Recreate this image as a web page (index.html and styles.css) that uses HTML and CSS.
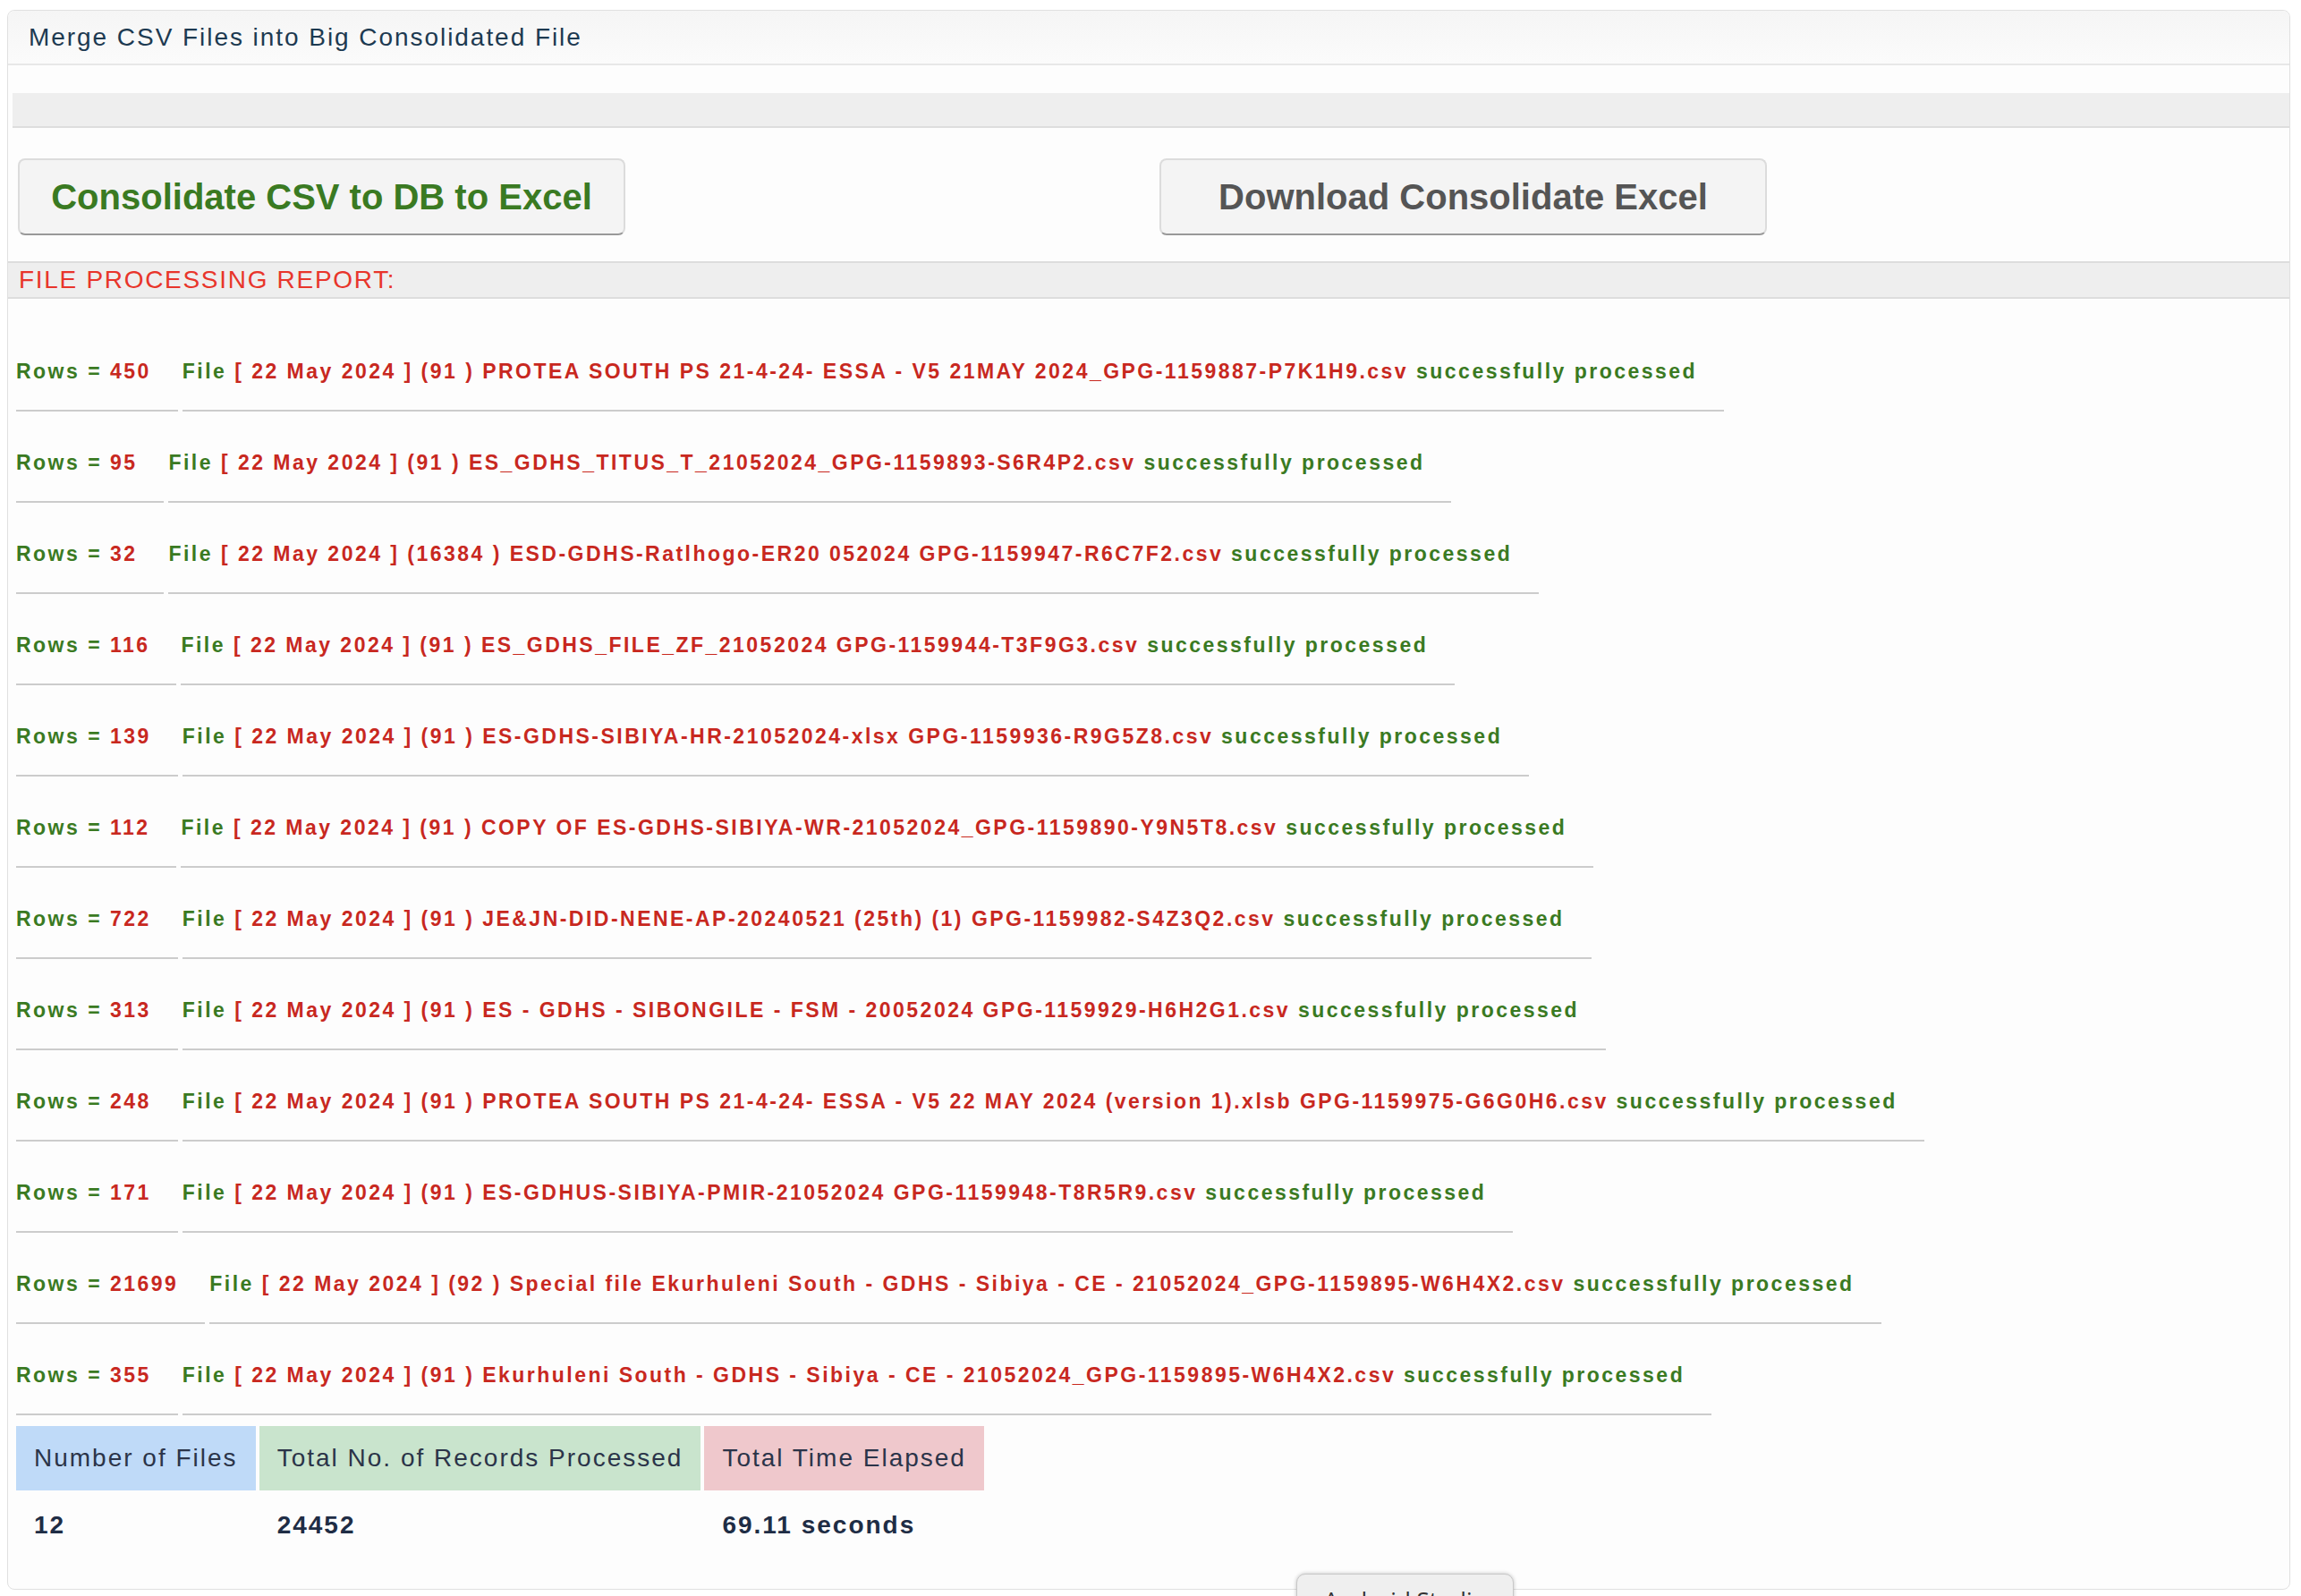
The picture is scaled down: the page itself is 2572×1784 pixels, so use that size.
FILE: index.html
```html
<!DOCTYPE html>
<html>
<head>
<meta charset="utf-8">
<title>Merge CSV Files</title>
<link rel="stylesheet" href="styles.css">
</head>
<body>
<div class="panel">
  <div class="panel-heading">Merge CSV Files into Big Consolidated File</div>
  <div class="panel-body">
    <div class="toolbar-strip"></div>
    <div class="actions">
      <div class="action-col"><button class="btn btn-consolidate">Consolidate CSV to DB to Excel</button></div>
      <div class="action-col"><button class="btn btn-download">Download Consolidate Excel</button></div>
    </div>
    <div class="report-heading">FILE PROCESSING REPORT:</div>
    <div class="report-list">
      <table class="report-row"><tr><td class="rows-cell"><span class="ok">Rows = </span><span class="err">450</span></td><td class="file-cell"><span class="ok">File</span> <span class="err">[ 22 May 2024 ] (91 ) PROTEA SOUTH PS 21-4-24- ESSA - V5 21MAY 2024_GPG-1159887-P7K1H9.csv</span> <span class="ok">successfully processed</span></td></tr></table>
      <table class="report-row"><tr><td class="rows-cell"><span class="ok">Rows = </span><span class="err">95</span></td><td class="file-cell"><span class="ok">File</span> <span class="err">[ 22 May 2024 ] (91 ) ES_GDHS_TITUS_T_21052024_GPG-1159893-S6R4P2.csv</span> <span class="ok">successfully processed</span></td></tr></table>
      <table class="report-row"><tr><td class="rows-cell"><span class="ok">Rows = </span><span class="err">32</span></td><td class="file-cell"><span class="ok">File</span> <span class="err">[ 22 May 2024 ] (16384 ) ESD-GDHS-Ratlhogo-ER20 052024 GPG-1159947-R6C7F2.csv</span> <span class="ok">successfully processed</span></td></tr></table>
      <table class="report-row"><tr><td class="rows-cell"><span class="ok">Rows = </span><span class="err">116</span></td><td class="file-cell"><span class="ok">File</span> <span class="err">[ 22 May 2024 ] (91 ) ES_GDHS_FILE_ZF_21052024 GPG-1159944-T3F9G3.csv</span> <span class="ok">successfully processed</span></td></tr></table>
      <table class="report-row"><tr><td class="rows-cell"><span class="ok">Rows = </span><span class="err">139</span></td><td class="file-cell"><span class="ok">File</span> <span class="err">[ 22 May 2024 ] (91 ) ES-GDHS-SIBIYA-HR-21052024-xlsx GPG-1159936-R9G5Z8.csv</span> <span class="ok">successfully processed</span></td></tr></table>
      <table class="report-row"><tr><td class="rows-cell"><span class="ok">Rows = </span><span class="err">112</span></td><td class="file-cell"><span class="ok">File</span> <span class="err">[ 22 May 2024 ] (91 ) COPY OF ES-GDHS-SIBIYA-WR-21052024_GPG-1159890-Y9N5T8.csv</span> <span class="ok">successfully processed</span></td></tr></table>
      <table class="report-row"><tr><td class="rows-cell"><span class="ok">Rows = </span><span class="err">722</span></td><td class="file-cell"><span class="ok">File</span> <span class="err">[ 22 May 2024 ] (91 ) JE&amp;JN-DID-NENE-AP-20240521 (25th) (1) GPG-1159982-S4Z3Q2.csv</span> <span class="ok">successfully processed</span></td></tr></table>
      <table class="report-row"><tr><td class="rows-cell"><span class="ok">Rows = </span><span class="err">313</span></td><td class="file-cell"><span class="ok">File</span> <span class="err">[ 22 May 2024 ] (91 ) ES - GDHS - SIBONGILE - FSM - 20052024 GPG-1159929-H6H2G1.csv</span> <span class="ok">successfully processed</span></td></tr></table>
      <table class="report-row"><tr><td class="rows-cell"><span class="ok">Rows = </span><span class="err">248</span></td><td class="file-cell"><span class="ok">File</span> <span class="err">[ 22 May 2024 ] (91 ) PROTEA SOUTH PS 21-4-24- ESSA - V5 22 MAY 2024 (version 1).xlsb GPG-1159975-G6G0H6.csv</span> <span class="ok">successfully processed</span></td></tr></table>
      <table class="report-row"><tr><td class="rows-cell"><span class="ok">Rows = </span><span class="err">171</span></td><td class="file-cell"><span class="ok">File</span> <span class="err">[ 22 May 2024 ] (91 ) ES-GDHUS-SIBIYA-PMIR-21052024 GPG-1159948-T8R5R9.csv</span> <span class="ok">successfully processed</span></td></tr></table>
      <table class="report-row"><tr><td class="rows-cell"><span class="ok">Rows = </span><span class="err">21699</span></td><td class="file-cell"><span class="ok">File</span> <span class="err">[ 22 May 2024 ] (92 ) Special file Ekurhuleni South - GDHS - Sibiya - CE - 21052024_GPG-1159895-W6H4X2.csv</span> <span class="ok">successfully processed</span></td></tr></table>
      <table class="report-row"><tr><td class="rows-cell"><span class="ok">Rows = </span><span class="err">355</span></td><td class="file-cell"><span class="ok">File</span> <span class="err">[ 22 May 2024 ] (91 ) Ekurhuleni South - GDHS - Sibiya - CE - 21052024_GPG-1159895-W6H4X2.csv</span> <span class="ok">successfully processed</span></td></tr></table>
    </div>
    <table class="summary">
      <tr>
        <th class="sum-files">Number of Files</th>
        <th class="sum-records">Total No. of Records Processed</th>
        <th class="sum-time">Total Time Elapsed</th>
      </tr>
      <tr>
        <td>12</td>
        <td>24452</td>
        <td>69.11 seconds</td>
      </tr>
    </table>
  </div>
</div>
<div class="dock-tooltip">Android Studio</div>
</body>
</html>
```
FILE: styles.css
```css
html {
  overflow: hidden;
  background: #ffffff;
}
body {
  margin: 11px 12px 0 8px;
  font-family: "Liberation Sans", Arial, Helvetica, sans-serif;
  background: #ffffff;
}
.panel {
  border: 1px solid #e0e0e0;
  border-radius: 8px;
  background: #fdfdfd;
}
.panel-heading {
  height: 59px;
  line-height: 59px;
  padding-left: 23px;
  font-size: 28px;
  letter-spacing: 1.95px;
  color: #1d3a51;
  background: linear-gradient(#f5f5f5, #fbfbfb);
  border-bottom: 2px solid #e8e8e8;
  border-radius: 8px 8px 0 0;
}
.panel-body {
  padding: 31px 0 32px 0;
}
.toolbar-strip {
  margin-left: 5px;
  height: 37px;
  background: #eeeeee;
  border-bottom: 2px solid #dddddd;
}
.actions {
  display: grid;
  grid-template-columns: 1276px 1fr;
  margin: 34px 0 0 5px;
}
.action-col {
  padding-left: 6px;
}
.btn {
  width: 679px;
  height: 86px;
  background: #f4f4f4;
  border: 2px solid #dcdcdc;
  border-bottom-color: #999999;
  border-radius: 8px;
  font-family: "Liberation Sans", Arial, Helvetica, sans-serif;
  font-weight: bold;
  font-size: 40px;
  padding: 0;
  cursor: pointer;
}
.btn-consolidate {
  color: #3a7a22;
}
.btn-download {
  color: #555555;
}
.report-heading {
  margin-top: 29px;
  height: 38px;
  line-height: 38px;
  padding-left: 12px;
  background: #eeeeee;
  border-top: 2px solid #dddddd;
  border-bottom: 2px solid #dddddd;
  color: #e8352b;
  font-size: 28px;
  letter-spacing: 1.7px;
}
.report-list {
  padding-top: 38px;
}
.report-row {
  margin-left: 4px;
  border-collapse: separate;
  border-spacing: 5px 0;
  margin-bottom: 14px;
  font-size: 23px;
  font-weight: bold;
  letter-spacing: 2.48px;
}
.report-row:last-child {
  margin-bottom: 12px;
}
.report-row td {
  padding: 30px 30px 30px 0;
  line-height: 26px;
  border-bottom: 2px solid #cccccc;
  white-space: nowrap;
}
.ok {
  color: #3a7a22;
}
.err {
  color: #c8281f;
}
.summary {
  margin-left: 5px;
  border-collapse: separate;
  border-spacing: 4px 0;
  font-size: 28px;
  letter-spacing: 2px;
}
.summary th {
  height: 72px;
  padding: 0 20px;
  text-align: left;
  font-weight: normal;
  color: #2b3449;
  white-space: nowrap;
}
.summary td {
  height: 78px;
  padding: 0 20px;
  font-weight: bold;
  color: #1f2d45;
}
.sum-files {
  background: #bfdaf8;
}
.sum-records {
  background: #c9e4cd;
}
.sum-time {
  background: #efc8cc;
}
.dock-tooltip {
  position: absolute;
  left: 1449px;
  top: 1759px;
  width: 243px;
  height: 60px;
  box-sizing: border-box;
  padding-top: 10px;
  background: #efefef;
  border: 1px solid #c8c8c8;
  border-radius: 10px;
  box-shadow: 0 0 4px rgba(0, 0, 0, 0.25);
  text-align: center;
  font-family: "Open Sans", "Liberation Sans", sans-serif;
  font-size: 26px;
  color: #333333;
}
```
